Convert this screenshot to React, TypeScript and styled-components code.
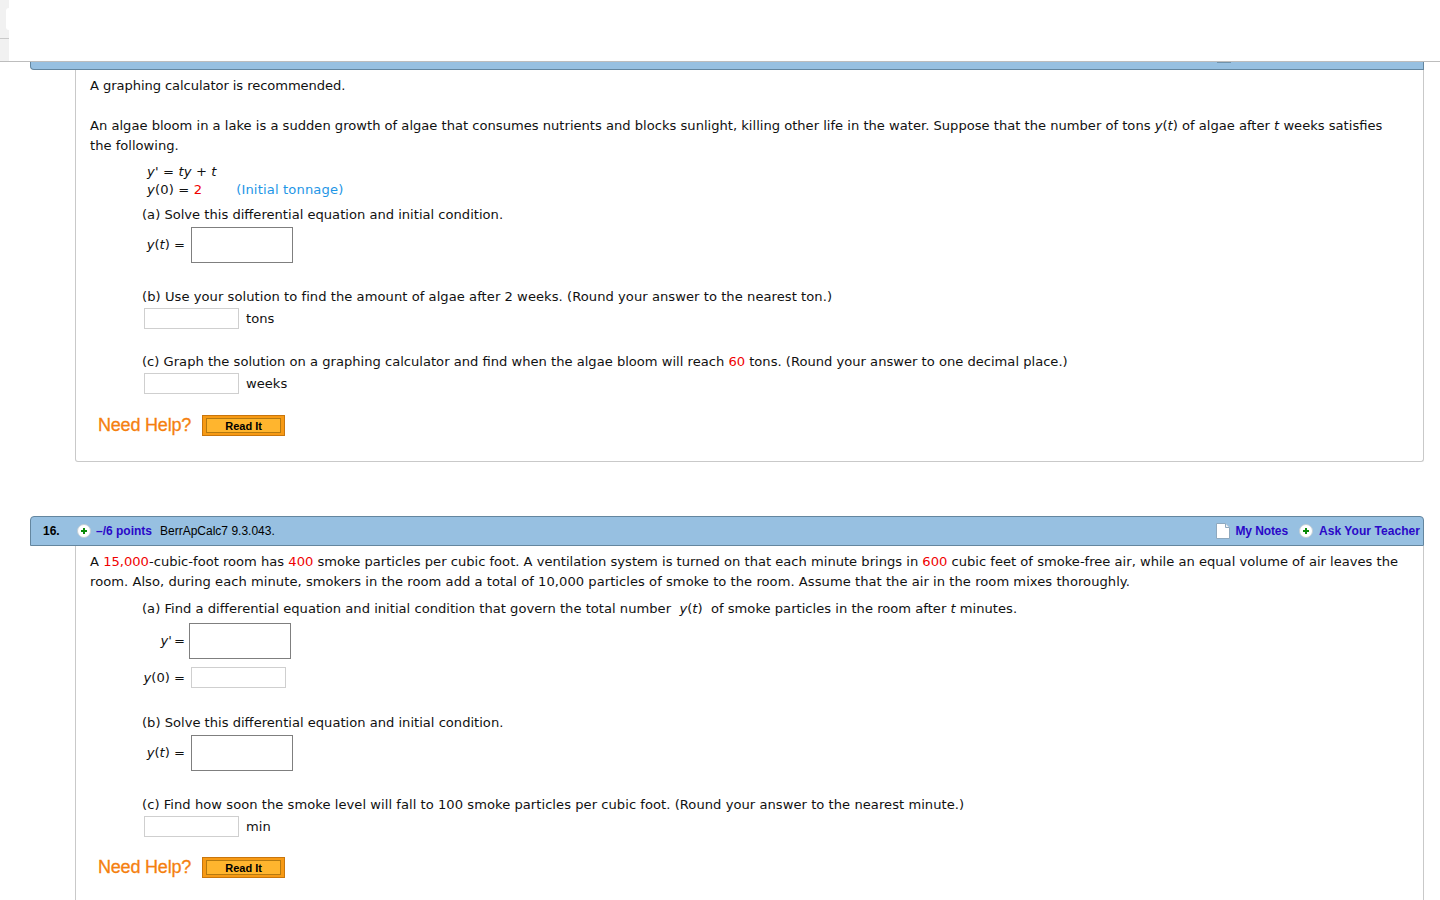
import styled, { createGlobalStyle } from 'styled-components';

const Global = createGlobalStyle`
  html, body { margin: 0; padding: 0; background: #fff; }
  body { font-family: "DejaVu Sans", Verdana, sans-serif; font-size: 13.1px; color: #111; }
`;

const Page = styled.div`
  width: 1440px;
  height: 900px;
  overflow: hidden;
`;

const TopBar = styled.header`
  height: 61px;
  border-bottom: 1px solid #bdbdbd;
  display: flex;
`;

const SideTab = styled.div`
  width: 9px;
  background: linear-gradient(#f1f1f1 38px, #c9c9c9 38px, #c9c9c9 39px, #f1f1f1 39px);
  position: relative;
  &::after {
    content: '';
    position: absolute;
    left: 6px;
    top: 8px;
    width: 3px;
    height: 22px;
    background: #fff;
    border-radius: 3px 0 0 3px;
  }
`;

const Question = styled.section`
  margin-left: 30px;
  width: 1394px;
`;

const ClippedBar = styled.div`
  height: 7px;
  background: #97c0e1;
  border-bottom: 1px solid #64869f;
  border-right: 1px solid #64869f;
  border-left: 1px solid #64869f;
  border-radius: 0 0 0 4px;
  position: relative;
  width: 1392px;
  &::after {
    content: '';
    position: absolute;
    left: 1186px;
    top: 0;
    width: 14px;
    height: 1px;
    background: #6f93ad;
  }
`;

const Bar = styled.div`
  height: 28px;
  background: #97c0e1;
  border: 1px solid #64869f;
  border-radius: 4px 4px 0 0;
  display: flex;
  align-items: center;
  font-family: "Liberation Sans", Arial, sans-serif;
  font-size: 12px;
  color: #000;
`;

const Num = styled.b`
  width: 46px;
  padding-left: 12px;
  box-sizing: border-box;
`;

const Link = styled.a`
  font-weight: bold;
  color: #2a08c8;
`;

const Points = styled(Link)`
  margin: 0 8px 0 5px;
`;

const Spacer = styled.div`
  flex: 1;
`;

const AskLink = styled(Link)`
  margin: 0 3px 0 6px;
  letter-spacing: 0.06px;
`;

const NotesLink = styled(Link)`
  margin: 0 11px 0 5px;
  letter-spacing: -0.1px;
`;

const PlusIcon = () => (
  <svg width="14" height="14" viewBox="0 0 14 14">
    <circle cx="7" cy="7" r="6.5" fill="#fff" stroke="#c3ced6" />
    <path d="M7 4v6M4 7h6" stroke="#0a8a0a" strokeWidth="2" />
  </svg>
);

const NoteIcon = () => (
  <svg width="14" height="16" viewBox="0 0 14 16">
    <path d="M.5.5h9l4 4v11H.5z" fill="#fff" stroke="#8ea9bf" />
    <path d="M9.5.5v4h4" fill="#eef2f5" stroke="#8ea9bf" />
  </svg>
);

const Body = styled.div`
  margin-left: 45px;
  border-left: 1px solid #c9c9c9;
  border-right: 1px solid #c9c9c9;
  border-bottom: 1px solid #c9c9c9;
  border-radius: 0 0 3px 3px;
  padding: 6px 14px 40px;
`;

const FirstBody = styled(Body)`
  height: 385px;
  padding-bottom: 0;
`;

const Line = styled.div<{ $top?: number; $track?: number }>`
  line-height: 20px;
  margin-top: ${p => p.$top ?? 0}px;
  letter-spacing: ${p => p.$track ?? 0}px;
  white-space: nowrap;
`;

const Part = styled.div<{ $top?: number; $track?: number }>`
  line-height: 20px;
  margin: ${p => p.$top ?? 0}px 0 0 52px;
  letter-spacing: ${p => p.$track ?? 0}px;
  white-space: nowrap;
`;

const Eq = styled.div<{ $top?: number }>`
  line-height: 18px;
  margin: ${p => p.$top ?? 0}px 0 0 57px;
  letter-spacing: 0.15px;
  white-space: nowrap;
`;

const Red = styled.span`
  color: #f00000;
`;

const Note = styled.span`
  color: #1e96e6;
  margin-left: 34px;
`;

const AnswerRow = styled.div<{ $top: number }>`
  display: flex;
  align-items: center;
  margin: ${p => p.$top}px 0 0 54px;
  line-height: 20px;
`;

const Label = styled.span<{ $tight?: boolean }>`
  width: 43px;
  text-align: right;
  margin: 0 ${p => (p.$tight ? 4 : 6)}px 0 -2px;
  white-space: nowrap;
  word-spacing: ${p => (p.$tight ? -2 : 0)}px;
`;

const BigInput = styled.div`
  width: 100px;
  height: 34px;
  border: 1px solid #7f7f7f;
`;

const SmallInput = styled.div`
  width: 93px;
  height: 19px;
  border: 1px solid #cfcfcf;
`;

const Unit = styled.span`
  margin-left: 7px;
`;

const HelpRow = styled.div<{ $top: number }>`
  display: flex;
  align-items: center;
  height: 21px;
  margin: ${p => p.$top}px 0 0 8px;
`;

const HelpLabel = styled.span`
  font-family: "Liberation Sans", Arial, sans-serif;
  font-size: 18px;
  color: #f57f0f;
  letter-spacing: -0.2px;
  -webkit-text-stroke: 0.3px #f57f0f;
  margin-right: 11px;
`;

const ReadIt = styled.button`
  width: 83px;
  height: 21px;
  padding: 0;
  background: #f79a14;
  border: 1px solid #c9760c;
  display: flex;
  align-items: center;
  justify-content: center;
  font-family: "Liberation Sans", Arial, sans-serif;
  font-size: 11px;
  font-weight: bold;
  color: #000;
  & > span {
    width: 73px;
    height: 13px;
    line-height: 15px;
    background: #ffb52e;
    border: 1px solid #b5790f;
  }
`;

const Gap = styled.div`
  height: 54px;
`;

export default function App() {
  return (
    <Page>
      <Global />
      <TopBar><SideTab /></TopBar>
      <Question>
        <ClippedBar />
        <FirstBody>
          <Line $track={-0.08}>A graphing calculator is recommended.</Line>
          <Line $top={20}>
            An algae bloom in a lake is a sudden growth of algae that consumes nutrients and blocks sunlight, killing other life in the water. Suppose that the number of tons <i>y</i>(<i>t</i>) of algae after <i>t</i> weeks satisfies
          </Line>
          <Line>the following.</Line>
          <Eq $top={7}><i>y</i>' = <i>ty</i> + <i>t</i></Eq>
          <Eq><i>y</i>(0) = <Red>2</Red><Note>(Initial tonnage)</Note></Eq>
          <Part $top={6}>(a) Solve this differential equation and initial condition.</Part>
          <AnswerRow $top={2}>
            <Label><i>y</i>(<i>t</i>) =</Label>
            <BigInput />
          </AnswerRow>
          <Part $top={24} $track={0.05}>(b) Use your solution to find the amount of algae after 2 weeks. (Round your answer to the nearest ton.)</Part>
          <AnswerRow $top={1}><SmallInput /><Unit>tons</Unit></AnswerRow>
          <Part $top={23}>(c) Graph the solution on a graphing calculator and find when the algae bloom will reach <Red>60</Red> tons. (Round your answer to one decimal place.)</Part>
          <AnswerRow $top={1}><SmallInput /><Unit>weeks</Unit></AnswerRow>
          <HelpRow $top={21}>
            <HelpLabel>Need Help?</HelpLabel>
            <ReadIt><span>Read It</span></ReadIt>
          </HelpRow>
        </FirstBody>
      </Question>
      <Gap />
      <Question>
        <Bar>
          <Num>16.</Num>
          <PlusIcon />
          <Points>–/6 points</Points>
          BerrApCalc7 9.3.043.
          <Spacer />
          <NoteIcon />
          <NotesLink>My Notes</NotesLink>
          <PlusIcon />
          <AskLink>Ask Your Teacher</AskLink>
        </Bar>
        <Body>
          <Line>
            A <Red>15,000</Red>-cubic-foot room has <Red>400</Red> smoke particles per cubic foot. A ventilation system is turned on that each minute brings in <Red>600</Red> cubic feet of smoke-free air, while an equal volume of air leaves the
          </Line>
          <Line $track={0.04}>room. Also, during each minute, smokers in the room add a total of 10,000 particles of smoke to the room. Assume that the air in the room mixes thoroughly.</Line>
          <Part $top={7} $track={0.015}>(a) Find a differential equation and initial condition that govern the total number &nbsp;<i>y</i>(<i>t</i>)&nbsp; of smoke particles in the room after <i>t</i> minutes.</Part>
          <AnswerRow $top={4}>
            <Label $tight><i>y</i>' =</Label>
            <BigInput />
          </AnswerRow>
          <AnswerRow $top={8}>
            <Label><i>y</i>(0) =</Label>
            <SmallInput />
          </AnswerRow>
          <Part $top={25}>(b) Solve this differential equation and initial condition.</Part>
          <AnswerRow $top={2}>
            <Label><i>y</i>(<i>t</i>) =</Label>
            <BigInput />
          </AnswerRow>
          <Part $top={24} $track={0.04}>(c) Find how soon the smoke level will fall to 100 smoke particles per cubic foot. (Round your answer to the nearest minute.)</Part>
          <AnswerRow $top={1}><SmallInput /><Unit>min</Unit></AnswerRow>
          <HelpRow $top={20}>
            <HelpLabel>Need Help?</HelpLabel>
            <ReadIt><span>Read It</span></ReadIt>
          </HelpRow>
        </Body>
      </Question>
    </Page>
  );
}
